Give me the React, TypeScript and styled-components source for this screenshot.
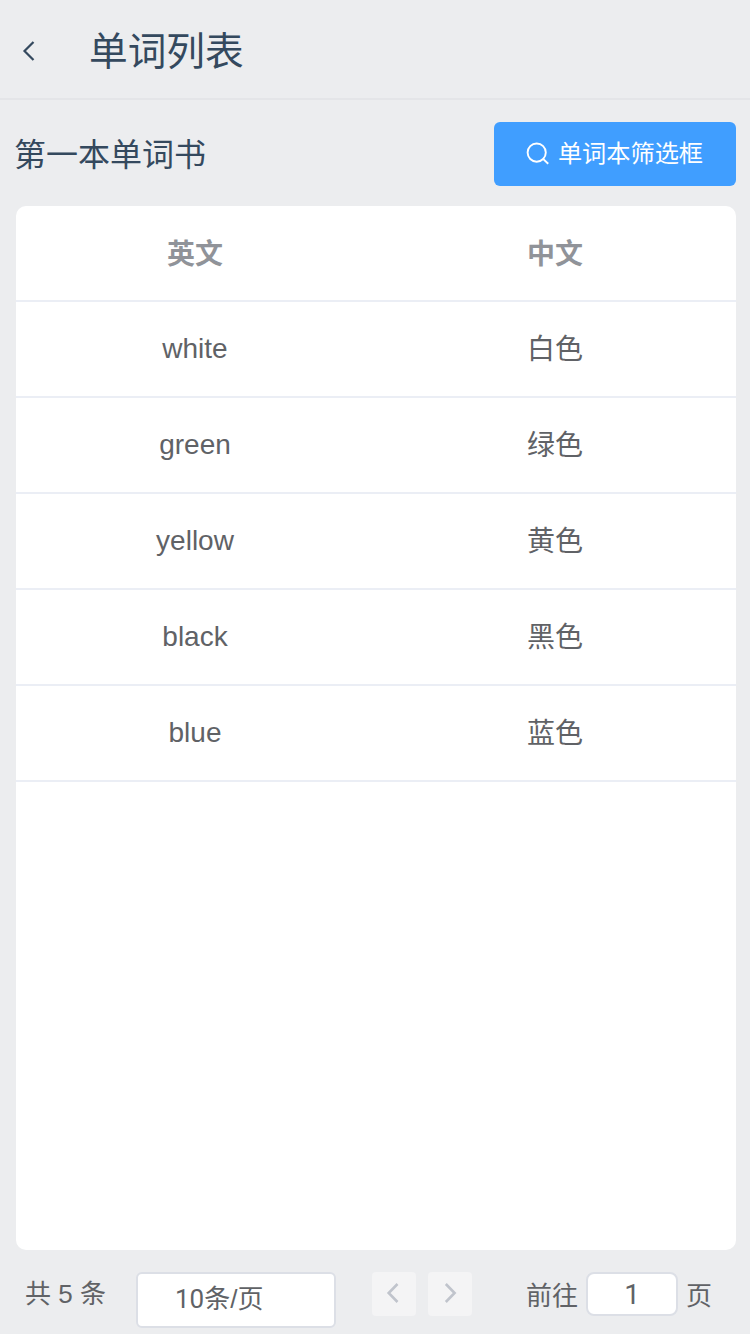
import React from 'react';
import styled, { createGlobalStyle } from 'styled-components';

const GlobalStyle = createGlobalStyle`
  * { box-sizing: border-box; }
  body {
    margin: 0;
    background: #ecedef;
    font-family: "Liberation Sans", "Noto Sans CJK SC", sans-serif;
  }
`;

const Page = styled.div`
  display: flex;
  flex-direction: column;
  width: 750px;
  height: 1334px;
  overflow: hidden;
  background: #ecedef;
  color: #34495e;
`;

const Header = styled.header`
  display: flex;
  align-items: center;
  flex: none;
  height: 100px;
  padding: 4px 0 0 22px;
  border-bottom: 2px solid #e4e5e8;
`;

const BackButton = styled.a`
  display: flex;
  width: 67px;
`;

const Title = styled.h1`
  margin: 0;
  padding-top: 2px;
  font-size: 38.7px;
  font-weight: 400;
  line-height: 56px;
`;

const BookBar = styled.section`
  display: flex;
  align-items: center;
  justify-content: space-between;
  flex: none;
  height: 106px;
  padding: 2px 14px 0;
`;

const BookName = styled.h2`
  margin: 0;
  padding-top: 2px;
  font-size: 32px;
  font-weight: 400;
  line-height: 48px;
`;

const FilterButton = styled.button`
  display: flex;
  align-items: center;
  justify-content: center;
  gap: 8px;
  width: 242px;
  height: 64px;
  padding: 0 1px 0 0;
  border: 0;
  border-radius: 6px;
  background: #409eff;
  color: #fff;
  font: 24.2px/36px "Liberation Sans", "Noto Sans CJK SC", sans-serif;
`;

const TableCard = styled.main`
  flex: none;
  height: 1044px;
  margin: 0 14px 0 16px;
  border-radius: 10px;
  background: #fff;
`;

const Row = styled.div<{ $head?: boolean }>`
  display: grid;
  grid-template-columns: 358px 362px;
  align-items: center;
  height: 96px;
  padding-top: ${(p) => (p.$head ? 3 : 0)}px;
  border-bottom: 2px solid #ebeef5;
  color: ${(p) => (p.$head ? '#909399' : '#606266')};
  font-size: 28px;
  font-weight: ${(p) => (p.$head ? 700 : 400)};
  line-height: 46px;
  text-align: center;
`;

const Meaning = styled.span`
  padding-top: 2px;
`;

const Pagination = styled.footer`
  display: flex;
  align-items: flex-start;
  flex: none;
  height: 84px;
  padding: 22px 0 0 25px;
  color: #606266;
  font-size: 26px;
  line-height: 44px;
  white-space: nowrap;
`;

const Total = styled.span`
  width: 111px;
`;

const SizeSelect = styled.div`
  width: 200px;
  height: 56px;
  margin-right: 36px;
  padding-left: 37px;
  border: 2px solid #dcdfe6;
  border-radius: 6px;
  background: #fff;
  line-height: 51px;
`;

const Digits = styled.span`
  font-family: Roboto, "Liberation Sans", sans-serif;
`;

const PageButton = styled.button`
  display: flex;
  align-items: center;
  justify-content: center;
  width: 44px;
  height: 44px;
  margin-right: 12px;
  padding: 0;
  border: 0;
  border-radius: 4px;
  background: #f4f4f5;
  color: #c0c4cc;
`;

const Jumper = styled.label`
  display: flex;
  margin-left: 42px;
`;

const JumpText = styled.span`
  padding-top: 2px;
`;

const JumpInput = styled.input`
  width: 92px;
  height: 44px;
  margin: 0 8px;
  padding: 1px 0 0;
  border: 2px solid #dcdfe6;
  border-radius: 8px;
  background: #fff;
  color: #606266;
  font: 28px Roboto, "Liberation Sans", sans-serif;
  text-align: center;
`;

const words = [
  ['white', '白色'],
  ['green', '绿色'],
  ['yellow', '黄色'],
  ['black', '黑色'],
  ['blue', '蓝色'],
];

export default function App() {
  return (
    <Page>
      <GlobalStyle />
      <Header>
        <BackButton aria-label="返回">
          <svg width="14" height="22" viewBox="0 0 14 22" fill="none" stroke="currentColor" strokeWidth="2.2">
            <path d="M11.5 2 2.5 11l9 9" />
          </svg>
        </BackButton>
        <Title>单词列表</Title>
      </Header>
      <BookBar>
        <BookName>第一本单词书</BookName>
        <FilterButton>
          <svg width="24" height="24" viewBox="0 0 24 24" fill="none" stroke="currentColor" strokeWidth="1.9">
            <circle cx="10.7" cy="10.6" r="9.1" />
            <path d="m16.8 16.6 5.4 5.2" />
          </svg>
          <span>单词本筛选框</span>
        </FilterButton>
      </BookBar>
      <TableCard>
        <Row $head>
          <span>英文</span>
          <span>中文</span>
        </Row>
        {words.map(([en, zh]) => (
          <Row key={en}>
            <span>{en}</span>
            <Meaning>{zh}</Meaning>
          </Row>
        ))}
      </TableCard>
      <Pagination>
        <Total>共 5 条</Total>
        <SizeSelect>
          <Digits>10</Digits>条/页
        </SizeSelect>
        <PageButton aria-label="上一页">
          <svg width="24" height="24" viewBox="0 0 24 24" fill="none" stroke="currentColor" strokeWidth="2.6">
            <path d="m15.5 2-8.8 9 8.8 9" />
          </svg>
        </PageButton>
        <PageButton aria-label="下一页">
          <svg width="24" height="24" viewBox="0 0 24 24" fill="none" stroke="currentColor" strokeWidth="2.6">
            <path d="m7.8 2 8.8 9-8.8 9" />
          </svg>
        </PageButton>
        <Jumper>
          <JumpText>前往</JumpText>
          <JumpInput defaultValue="1" />
          <JumpText>页</JumpText>
        </Jumper>
      </Pagination>
    </Page>
  );
}
